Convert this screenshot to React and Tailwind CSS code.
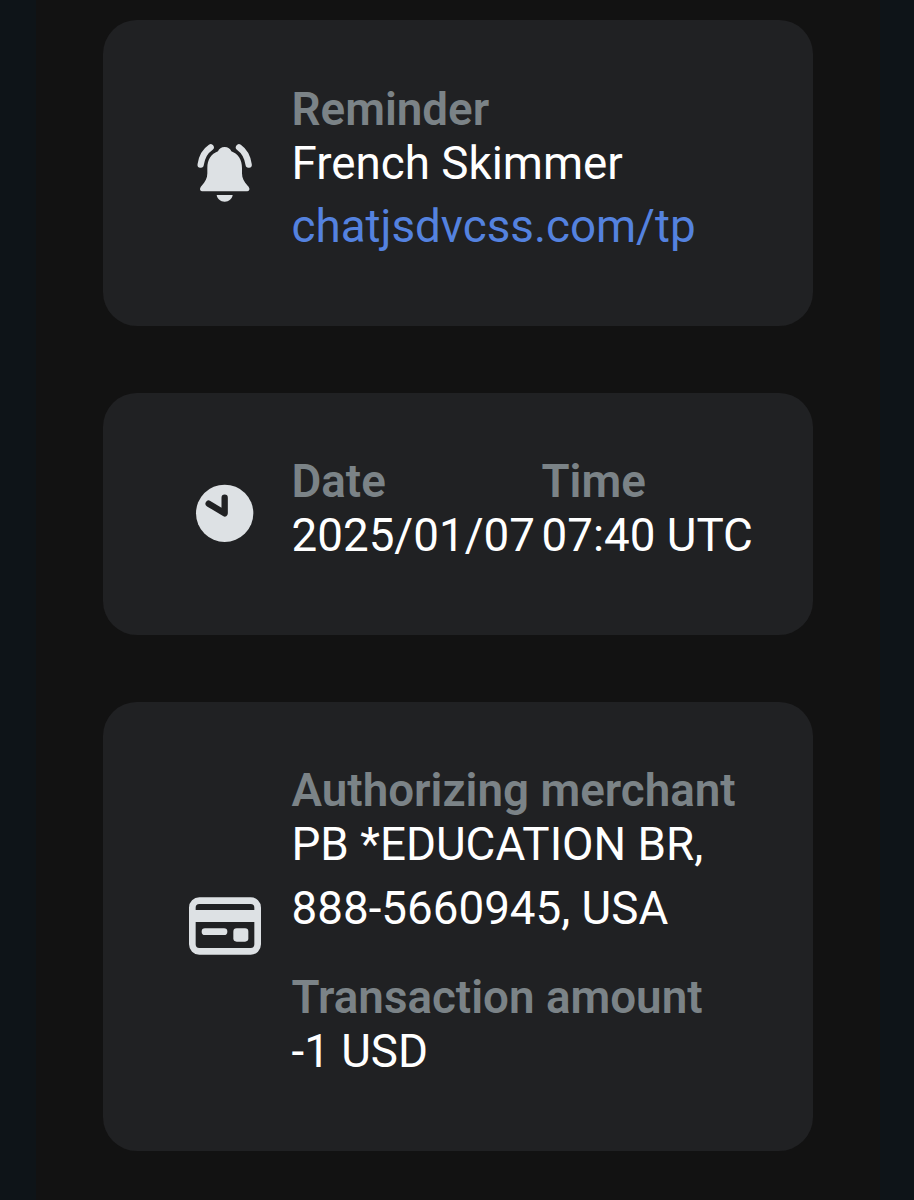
import React from 'react';

const BellIcon = () => (
  <svg width="90" height="86" viewBox="0 0 270 258" fill="#dde1e4">
    <path d="M134 51C144 51 151 56 154 64C175 72 186 90 186 114V130C186 145 192 155 203 167C212 176 209 184 198 184H70C59 184 57 176 65 167C76 155 82 145 82 130V114C82 90 93 72 114 64C117 56 124 51 134 51Z" />
    <path d="M110 195H158C156 207 147 215 134 215C121 215 112 207 110 195Z" />
    <path d="M92 52C74 64 65 82 62 104M177 52C194 64 203 82 206 104" fill="none" stroke="#dde1e4" strokeWidth="19" strokeLinecap="round" />
  </svg>
);

const ClockIcon = () => (
  <svg width="90" height="86" viewBox="0 0 270 258">
    <circle cx="134" cy="127" r="86" fill="#dde1e4" />
    <path d="M86 98L134 127V80" fill="none" stroke="#202123" strokeWidth="19" strokeLinecap="round" strokeLinejoin="round" />
  </svg>
);

const CardIcon = () => (
  <svg width="90" height="86" viewBox="0 0 270 258">
    <rect x="37" y="53" width="196" height="152" rx="21" fill="none" stroke="#dde1e4" strokeWidth="20" />
    <path d="M37 81H233V117H37Z" fill="#dde1e4" />
    <path d="M75 146H132" stroke="#dde1e4" strokeWidth="20" strokeLinecap="round" />
    <rect x="160" y="136" width="45" height="40" rx="10" fill="#dde1e4" />
  </svg>
);

const InfoCard = ({ icon, children }) => (
  <section className="flex items-center rounded-[34px] bg-[#202123] pt-[67.5px] pb-[67px] pl-[77px]">
    <div className="mr-[21.5px] w-[90px] shrink-0">{icon}</div>
    <div className="grow">{children}</div>
  </section>
);

const Field = ({ label, children }) => (
  <div>
    <h2 className="text-[45.75px] leading-[44px] font-semibold text-[#7b8387]">{label}</h2>
    <div className="text-[45.75px] leading-[63.5px] text-white">{children}</div>
  </div>
);

export default function App() {
  return (
    <div className="min-h-[1200px] bg-[#0e1418] pr-[34px] pl-[36px] font-['Roboto',sans-serif] whitespace-nowrap">
      <main className="flex min-h-[1200px] flex-col gap-[67px] bg-[#121212] pt-[20px] pr-[67px] pl-[67px]">
        <InfoCard icon={<BellIcon />}>
          <Field label="Reminder">
            <p>French Skimmer</p>
            <a className="block text-[#5482df]" href="#">chatjsdvcss.com/tp</a>
          </Field>
        </InfoCard>

        <InfoCard icon={<ClockIcon />}>
          <div className="grid grid-cols-[250px_1fr]">
            <Field label="Date">2025/01/07</Field>
            <Field label="Time">07:40 UTC</Field>
          </div>
        </InfoCard>

        <InfoCard icon={<CardIcon />}>
          <div className="flex flex-col gap-9">
            <Field label="Authorizing merchant">
              <p>PB *EDUCATION BR,</p>
              <p>888-5660945, USA</p>
            </Field>
            <Field label="Transaction amount">-1 USD</Field>
          </div>
        </InfoCard>
      </main>
    </div>
  );
}
